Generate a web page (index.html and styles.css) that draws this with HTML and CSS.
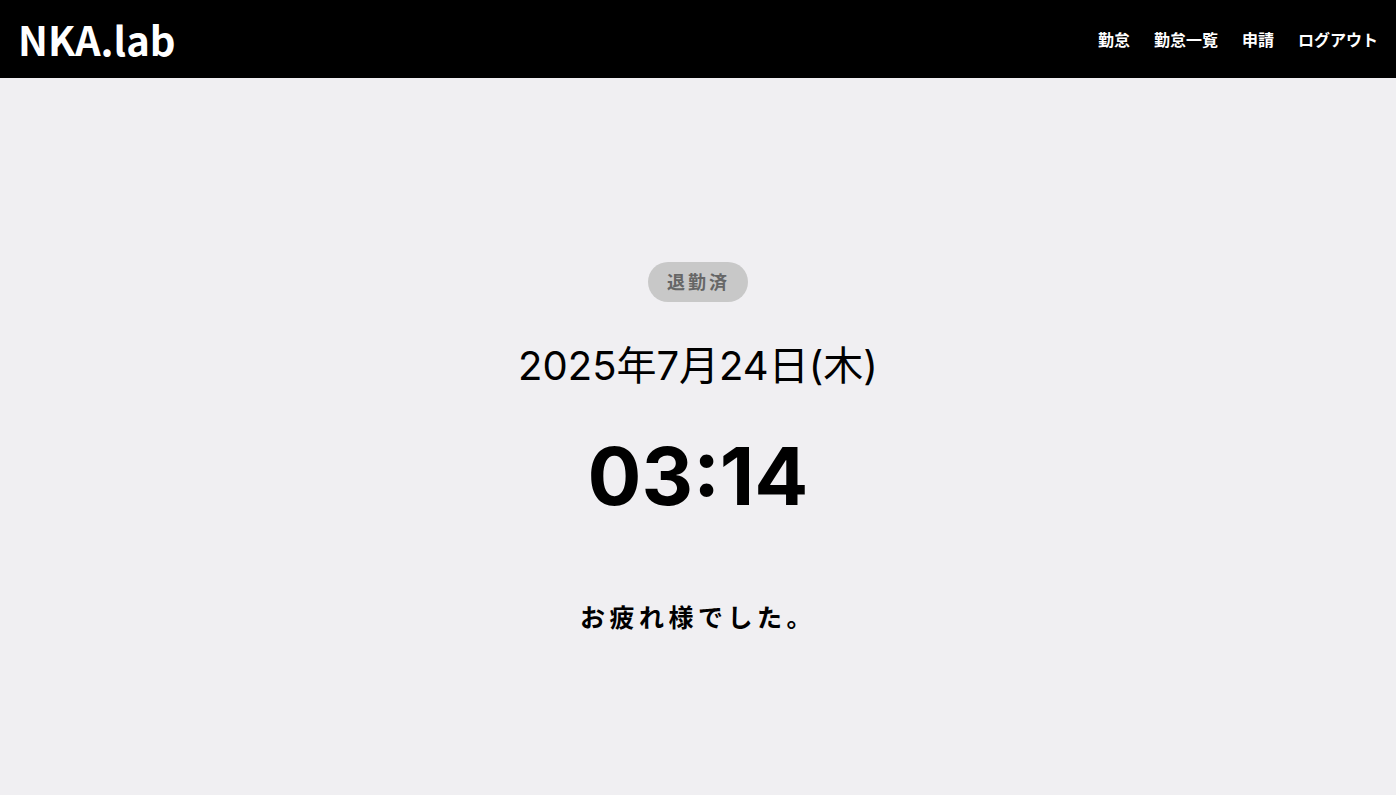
FILE: index.html
```html
<!DOCTYPE html>
<html lang="ja">
<head>
<meta charset="utf-8">
<title>NKA.lab</title>
<link rel="stylesheet" href="styles.css">
</head>
<body>
<header class="header">
  <div class="logo">NKA.lab</div>
  <nav class="nav">
    <a href="#">勤怠</a>
    <a href="#">勤怠一覧</a>
    <a href="#">申請</a>
    <a href="#">ログアウト</a>
  </nav>
</header>
<main class="main">
  <div class="badge">退勤済</div>
  <div class="date">2025年7月24日(木)</div>
  <div class="time">03:14</div>
  <div class="message">お疲れ様でした。</div>
</main>
</body>
</html>
```

FILE: styles.css
```css
* { box-sizing: border-box; }
html, body { margin: 0; padding: 0; }
body {
  background: #f0eff2;
  font-family: "Noto Sans", "Noto Sans CJK JP", sans-serif;
  color: #000;
  min-height: 795px;
}
.header {
  height: 78px;
  background: #000;
  display: flex;
  align-items: center;
  justify-content: space-between;
  padding: 0 18px 0 18px;
}
.logo {
  color: #fff;
  font-family: "Noto Sans CJK JP", sans-serif;
  font-size: 40px;
  font-weight: 700;
  line-height: 1;
}
.nav {
  display: flex;
  gap: 24px;
}
.nav a {
  color: #fff;
  text-decoration: none;
  font-size: 16px;
  font-weight: 700;
}
.main {
  display: flex;
  flex-direction: column;
  align-items: center;
  padding-top: 184px;
}
.badge {
  background: #c8c8c8;
  color: #666;
  font-weight: 700;
  font-size: 18px;
  letter-spacing: 3px;
  height: 40px;
  line-height: 40px;
  padding: 0 18px 0 19px;
  border-radius: 20px;
}
.date {
  margin-top: 40px;
  font-family: "Inter", "Noto Sans CJK JP", sans-serif;
  font-size: 40px;
  line-height: 48px;
}
.time {
  margin-top: 46px;
  font-family: "Inter", "Noto Sans CJK JP", sans-serif;
  font-weight: 700;
  font-size: 80px;
  line-height: 1;
}
.message {
  margin-top: 82px;
  font-size: 25px;
  font-weight: 700;
  letter-spacing: 4.5px;
}
```
